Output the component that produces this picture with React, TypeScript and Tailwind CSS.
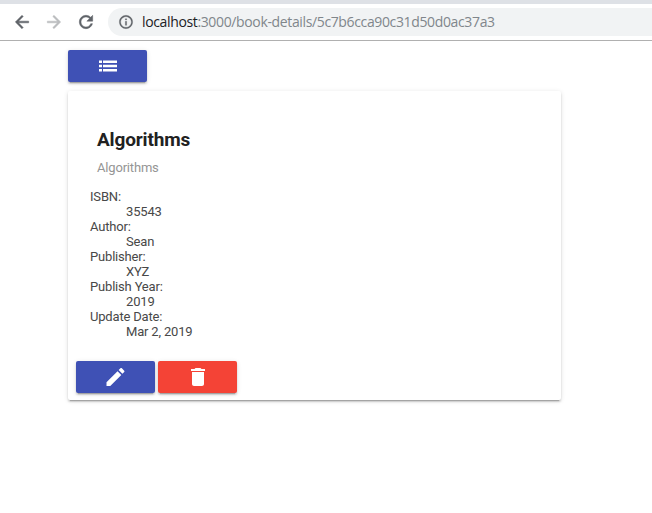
import React from 'react';

const raised =
  'flex h-8 w-[79px] items-center justify-center rounded-[2px] text-white shadow-[0_3px_1px_-2px_rgba(0,0,0,0.2),0_2px_2px_0_rgba(0,0,0,0.14),0_1px_5px_0_rgba(0,0,0,0.12)]';

function Icon({ d, size, className = '' }: { d: string; size: number; className?: string }) {
  return (
    <svg width={size} height={size} viewBox="0 0 24 24" fill="currentColor" className={className}>
      <path d={d} />
    </svg>
  );
}

const BACK = 'M20 11H7.83l5.59-5.59L12 4l-8 8 8 8 1.41-1.41L7.83 13H20v-2z';
const FORWARD = 'M12 4l-1.41 1.41L16.17 11H4v2h12.17l-5.58 5.59L12 20l8-8z';
const RELOAD =
  'M17.65 6.35C16.2 4.9 14.21 4 12 4c-4.42 0-7.99 3.58-7.99 8s3.57 8 7.99 8c3.73 0 6.84-2.55 7.73-6h-2.08c-.82 2.33-3.04 4-5.65 4-3.31 0-6-2.69-6-6s2.69-6 6-6c1.66 0 3.14.69 4.22 1.78L13 11h7V4l-2.35 2.35z';
const INFO =
  'M11 17h2v-6h-2v6zm1-15C6.48 2 2 6.48 2 12s4.48 10 10 10 10-4.48 10-10S17.52 2 12 2zm0 18c-4.41 0-8-3.59-8-8s3.59-8 8-8 8 3.59 8 8-3.59 8-8 8zM11 9h2V7h-2v2z';
const LIST = 'M3 9h3V6.5H3V9zm0 4.25h3v-2.5H3v2.5zm0 4.25h3V15H3v2.5zM7 9h14V6.5H7V9zm0 4.25h14v-2.5H7v2.5zm0 4.25h14V15H7v2.5z';
const EDIT =
  'M2.5 17.25V21h3.75L17.31 9.94l-3.75-3.75L2.5 17.25zM20.21 7.04c.39-.39.39-1.02 0-1.41l-2.34-2.34c-.39-.39-1.02-.39-1.41 0l-1.83 1.83 3.75 3.75 1.83-1.83z';
const TRASH = 'M6 19c0 1.1.9 2 2 2h8c1.1 0 2-.9 2-2V7H6v12zM19 4h-3.5l-1-1h-5l-1 1H5v2h14V4z';

const details = [
  ['ISBN:', '35543'],
  ['Author:', 'Sean'],
  ['Publisher:', 'XYZ'],
  ['Publish Year:', '2019'],
  ['Update Date:', 'Mar 2, 2019'],
];

export default function App() {
  return (
    <div className="h-[513px] w-[652px] overflow-hidden bg-white font-['Roboto',sans-serif]">
      <header className="h-[41px] border-b border-[#b0b0b0] bg-white">
        <div className="h-1 bg-[#dee1e6]" />
        <div className="flex h-9 items-center pl-3 text-[#5f6368]">
          <Icon d={BACK} size={20} className="stroke-current stroke-[0.6]" />
          <Icon d={FORWARD} size={20} className="ml-3 stroke-current stroke-[0.6] text-[#babcbe]" />
          <Icon d={RELOAD} size={20} className="ml-3 stroke-current stroke-[0.6]" />
          <div className="ml-3 flex h-7 flex-1 items-center rounded-l-full bg-[#f1f3f4] pl-[10px]">
            <Icon d={INFO} size={16} className="stroke-current stroke-[0.4]" />
            <span className="ml-2 whitespace-nowrap font-['Open_Sans',sans-serif] text-[14px] leading-5 tracking-[-0.36px] text-[#80868b]">
              <span className="text-[#202124]">localhost</span>:3000/book-details/5c7b6cca90c31d50d0ac37a3
            </span>
          </div>
        </div>
      </header>

      <main className="ml-[68px] w-[493px] pt-[9px]">
        <button className={`${raised} bg-[#3f51b5]`} aria-label="Book list">
          <Icon d={LIST} size={24} />
        </button>

        <section className="mt-[9px] h-[309px] rounded-[2px] bg-white px-2 pt-[37px] shadow-[0_3px_1px_-2px_rgba(0,0,0,0.2),0_2px_2px_0_rgba(0,0,0,0.14),0_1px_5px_0_rgba(0,0,0,0.12)]">
          <h2 className="ml-[21px] text-[19px] leading-6 font-bold tracking-[-0.15px] text-[#212121]">Algorithms</h2>
          <p className="mt-2 ml-[21px] text-[13px] leading-4 tracking-[-0.18px] text-[#959595]">Algorithms</p>
          <dl className="mt-[13px] ml-[14px] text-[13px] leading-[15px] tracking-[-0.18px] text-[#484848]">
            {details.map(([term, value]) => (
              <React.Fragment key={term}>
                <dt>{term}</dt>
                <dd className="ml-9">{value}</dd>
              </React.Fragment>
            ))}
          </dl>
          <div className="mt-[22px] flex gap-[3px]">
            <button className={`${raised} bg-[#3f51b5]`} aria-label="Edit">
              <Icon d={EDIT} size={24} />
            </button>
            <button className={`${raised} bg-[#f44336]`} aria-label="Delete">
              <Icon d={TRASH} size={24} />
            </button>
          </div>
        </section>
      </main>
    </div>
  );
}
